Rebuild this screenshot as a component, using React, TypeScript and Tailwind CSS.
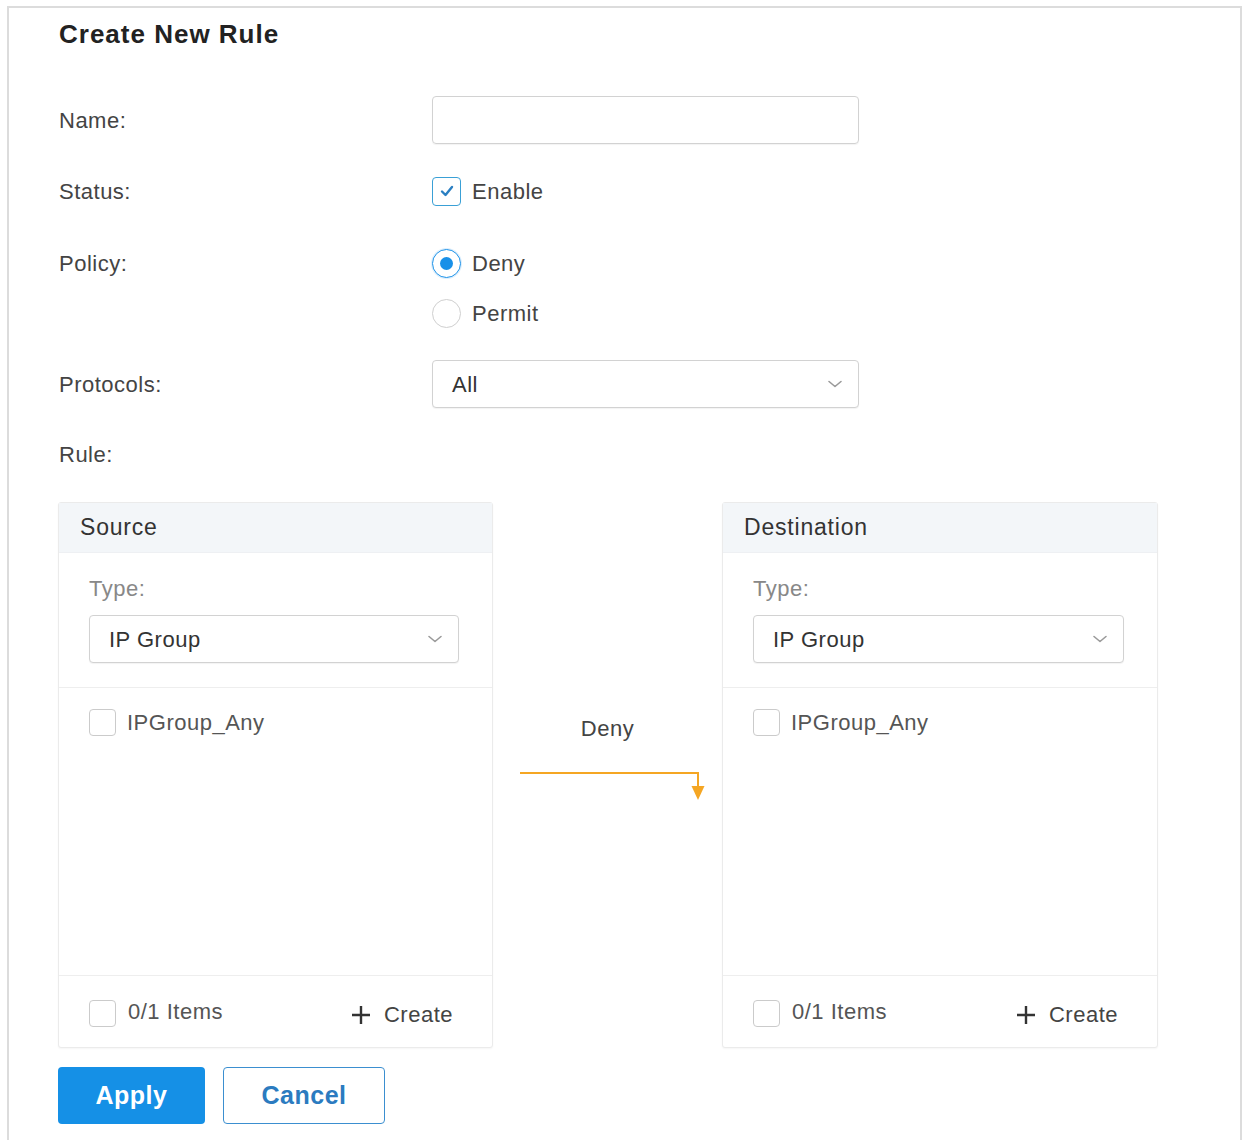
import React from 'react';

const font = "font-['Liberation_Sans',Arial,sans-serif]";
const text = 'text-[22px] tracking-[0.5px]';

function Chevron() {
  return (
    <svg width="16" height="10" viewBox="0 0 16 10" fill="none">
      <polyline points="2,2.5 8,7.5 14,2.5" stroke="#9a9a9a" strokeWidth="1.6" strokeLinecap="round" strokeLinejoin="round" />
    </svg>
  );
}

function Select({ value, className = '' }: { value: string; className?: string }) {
  return (
    <div
      className={`h-[48px] flex items-center justify-between pl-[19px] pr-[15px] border-[1.5px] border-[#d2d2d2] rounded-[4px] bg-white shadow-[0_1px_1px_rgba(0,0,0,0.05)] ${className}`}
    >
      <span className={`${text} text-[#333]`}>{value}</span>
      <Chevron />
    </div>
  );
}

function Box({ checked = false }: { checked?: boolean }) {
  if (checked) {
    return (
      <div className="w-[29px] h-[29px] rounded-[4px] border-[1.5px] border-[#3aa0d6] flex items-center justify-center">
        <svg width="16" height="14" viewBox="0 0 16 14" fill="none">
          <polyline points="3,7.5 6.5,11 13,3" stroke="#2a7fc2" strokeWidth="2.4" strokeLinecap="round" strokeLinejoin="round" />
        </svg>
      </div>
    );
  }
  return <div className="w-[27px] h-[27px] rounded-[4px] border-[1.5px] border-[#cbcbcb] bg-white" />;
}

function Radio({ on = false }: { on?: boolean }) {
  return on ? (
    <div className="w-[29px] h-[29px] rounded-full border-[1.5px] border-[#1890e8] flex items-center justify-center shadow-[0_0_0_1px_rgba(24,144,232,0.15)]">
      <div className="w-[13px] h-[13px] rounded-full bg-[#1890e8]" />
    </div>
  ) : (
    <div className="w-[29px] h-[29px] rounded-full border-[1.5px] border-[#cfcfcf] bg-white" />
  );
}

function Plus() {
  return (
    <svg width="22" height="22" viewBox="0 0 22 22">
      <path d="M11 2v18M2 11h18" stroke="#333" strokeWidth="2.4" />
    </svg>
  );
}

function Panel({ title, width }: { title: string; width: string }) {
  return (
    <div className={`${width} h-[546px] flex flex-col border border-[#ebebeb] rounded-[3px] bg-white shadow-[0_1px_2px_rgba(0,0,0,0.04)]`}>
      <div className="h-[50px] flex items-center pl-[21px] bg-[#f3f6f9] border-b border-[#eef0f3]">
        <span className="text-[23px] tracking-[0.8px] text-[#333]">{title}</span>
      </div>
      <div className="pl-[30px] pr-[33px] pt-[20px] pb-[24px] border-b border-[#eeeeee]">
        <div className={`h-[30px] flex items-center ${text} text-[#888]`}>Type:</div>
        <Select value="IP Group" className="mt-[12px]" />
      </div>
      <div className="flex-1 pl-[30px] pt-[14px]">
        <div className="h-[40px] flex items-center gap-[11px]">
          <Box />
          <span className={`${text} text-[#555]`}>IPGroup_Any</span>
        </div>
      </div>
      <div className="h-[72px] border-t border-[#eeeeee] flex items-center justify-between pl-[30px] pr-[39px]">
        <div className="flex items-center gap-[12px] pt-[4px]">
          <Box />
          <span className={`${text} text-[#555] -mt-[4px]`}>0/1 Items</span>
        </div>
        <div className="flex items-center gap-[12px] pt-[6px]">
          <Plus />
          <span className={`${text} text-[#444]`}>Create</span>
        </div>
      </div>
    </div>
  );
}

function Row({ label, children, className = '' }: { label: string; children: React.ReactNode; className?: string }) {
  return (
    <div className={`flex h-[48px] items-center ${className}`}>
      <div className={`w-[374px] pl-[1px] ${text} text-[#444]`}>{label}</div>
      {children}
    </div>
  );
}

export default function App() {
  return (
    <div className={`${font} w-[1243px] h-[1140px] bg-white pt-[6px] pl-[7px] pr-[1px]`}>
      <div className="h-full border-t-2 border-l-2 border-r-2 border-[#dcdcdc] pl-[49px]">
        <div className="h-[52px] flex items-center pl-[1px]">
          <h1 className="text-[26px] font-bold tracking-[1px] text-[#222]">Create New Rule</h1>
        </div>

        <Row label="Name:" className="mt-[36px]">
          <div className="w-[427px] h-[48px] border-[1.5px] border-[#d2d2d2] rounded-[4px] shadow-[0_1px_1px_rgba(0,0,0,0.05)]" />
        </Row>

        <Row label="Status:" className="mt-[23px]">
          <div className="flex items-center gap-[11px]">
            <Box checked />
            <span className={`${text} text-[#444]`}>Enable</span>
          </div>
        </Row>

        <div className="flex mt-[24px]">
          <div className={`w-[374px] h-[48px] flex items-center pl-[1px] ${text} text-[#444]`}>Policy:</div>
          <div className="flex flex-col">
            <div className="h-[48px] flex items-center gap-[11px]">
              <Radio on />
              <span className={`${text} text-[#444]`}>Deny</span>
            </div>
            <div className="h-[48px] mt-[2px] flex items-center gap-[11px]">
              <Radio />
              <span className={`${text} text-[#444]`}>Permit</span>
            </div>
          </div>
        </div>

        <Row label="Protocols:" className="mt-[23px]">
          <Select value="All" className="w-[427px]" />
        </Row>

        <Row label="Rule:" className="mt-[22px]">
          <span />
        </Row>

        <div className="flex mt-[24px]">
          <Panel title="Source" width="w-[435px]" />
          <div className="w-[229px] flex flex-col items-center pt-[211px]">
            <div className={`h-[30px] flex items-center ${text} text-[#444]`}>Deny</div>
            {/* orange flow arrow between the two panels */}
            <svg width="229" height="60" viewBox="0 0 229 60" fill="none">
              <path d="M27 30H205V46" stroke="#f5a623" strokeWidth="2" />
              <polygon points="198.5,43 211.5,43 205,57" fill="#f5a623" />
            </svg>
          </div>
          <Panel title="Destination" width="w-[436px]" />
        </div>

        <div className="flex gap-[18px] mt-[19px]">
          <button className="w-[147px] h-[57px] rounded-[4px] bg-[#1590e6] text-white text-[25px] font-bold tracking-[0.5px]">
            Apply
          </button>
          <button className="w-[162px] h-[57px] rounded-[4px] border-[1.5px] border-[#3b8fd0] bg-white text-[#2b7bc0] text-[25px] font-bold tracking-[0.5px]">
            Cancel
          </button>
        </div>
      </div>
    </div>
  );
}
